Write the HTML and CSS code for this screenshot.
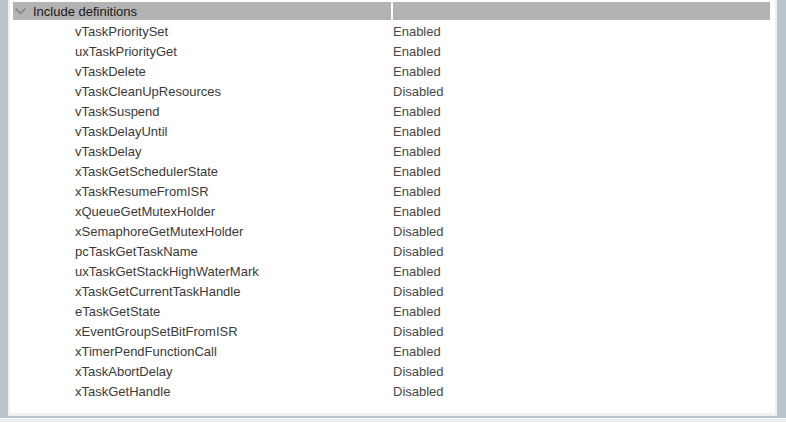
FILE: index.html
```html
<!DOCTYPE html>
<html>
<head>
<meta charset="utf-8">
<link rel="stylesheet" href="styles.css">
</head>
<body>
<div class="frame">
  <div class="panel">
    <div class="content">
      <div class="header">
        <div class="hcell hname">
          <svg class="chev" width="11" height="7" viewBox="0 0 11 7"><path d="M0.5 0.5 L5.5 5.5 L10.5 0.5" fill="none" stroke="#7a7a7a" stroke-width="1.2"/></svg>
          <span>Include definitions</span>
        </div>
        <div class="hcell hval"></div>
      </div>
      <div class="rows">
        <div class="row"><span class="name">vTaskPrioritySet</span><span class="val">Enabled</span></div>
        <div class="row"><span class="name">uxTaskPriorityGet</span><span class="val">Enabled</span></div>
        <div class="row"><span class="name">vTaskDelete</span><span class="val">Enabled</span></div>
        <div class="row"><span class="name">vTaskCleanUpResources</span><span class="val">Disabled</span></div>
        <div class="row"><span class="name">vTaskSuspend</span><span class="val">Enabled</span></div>
        <div class="row"><span class="name">vTaskDelayUntil</span><span class="val">Enabled</span></div>
        <div class="row"><span class="name">vTaskDelay</span><span class="val">Enabled</span></div>
        <div class="row"><span class="name">xTaskGetSchedulerState</span><span class="val">Enabled</span></div>
        <div class="row"><span class="name">xTaskResumeFromISR</span><span class="val">Enabled</span></div>
        <div class="row"><span class="name">xQueueGetMutexHolder</span><span class="val">Enabled</span></div>
        <div class="row"><span class="name">xSemaphoreGetMutexHolder</span><span class="val">Disabled</span></div>
        <div class="row"><span class="name">pcTaskGetTaskName</span><span class="val">Disabled</span></div>
        <div class="row"><span class="name">uxTaskGetStackHighWaterMark</span><span class="val">Enabled</span></div>
        <div class="row"><span class="name">xTaskGetCurrentTaskHandle</span><span class="val">Disabled</span></div>
        <div class="row"><span class="name">eTaskGetState</span><span class="val">Enabled</span></div>
        <div class="row"><span class="name">xEventGroupSetBitFromISR</span><span class="val">Disabled</span></div>
        <div class="row"><span class="name">xTimerPendFunctionCall</span><span class="val">Enabled</span></div>
        <div class="row"><span class="name">xTaskAbortDelay</span><span class="val">Disabled</span></div>
        <div class="row"><span class="name">xTaskGetHandle</span><span class="val">Disabled</span></div>
      </div>
    </div>
  </div>
</div>
<div class="splitter"></div>
</body>
</html>
```
FILE: styles.css
```css
html, body {
  margin: 0;
  padding: 0;
}
body {
  width: 786px;
  height: 422px;
  overflow: hidden;
  background: #b9c4cc;
  font-family: "Liberation Sans", Arial, sans-serif;
  font-size: 13px;
  color: #3a3a3a;
}
.frame {
  height: 416px;
  padding: 0 9px 0 8px;
}
.panel {
  height: 413px;
  background: #f0f0f0;
  padding: 0 2px 3px 2px;
}
.content {
  height: 413px;
  background: #ffffff;
  padding: 2px 5px 0 3px;
  box-sizing: border-box;
}
.header {
  display: flex;
  height: 18px;
}
.hcell {
  background: #b3b3b3;
  display: flex;
  align-items: center;
}
.hname {
  width: 378px;
  color: #1a1a1a;
}
.chev {
  margin-left: 2px;
  margin-right: 7px;
}
.hval {
  flex: 1;
  margin-left: 2px;
}
.rows {
  display: flex;
  flex-direction: column;
  padding-top: 1px;
}
.row {
  display: flex;
  height: 20px;
  align-items: center;
}
.name {
  width: 318px;
  padding-left: 62px;
}
.val {
  color: #474747;
}
.splitter {
  height: 6px;
  background: linear-gradient(#b9c4cc 0 2px, #ffffff 2px 3px, #eeeeee 3px);
}
```
